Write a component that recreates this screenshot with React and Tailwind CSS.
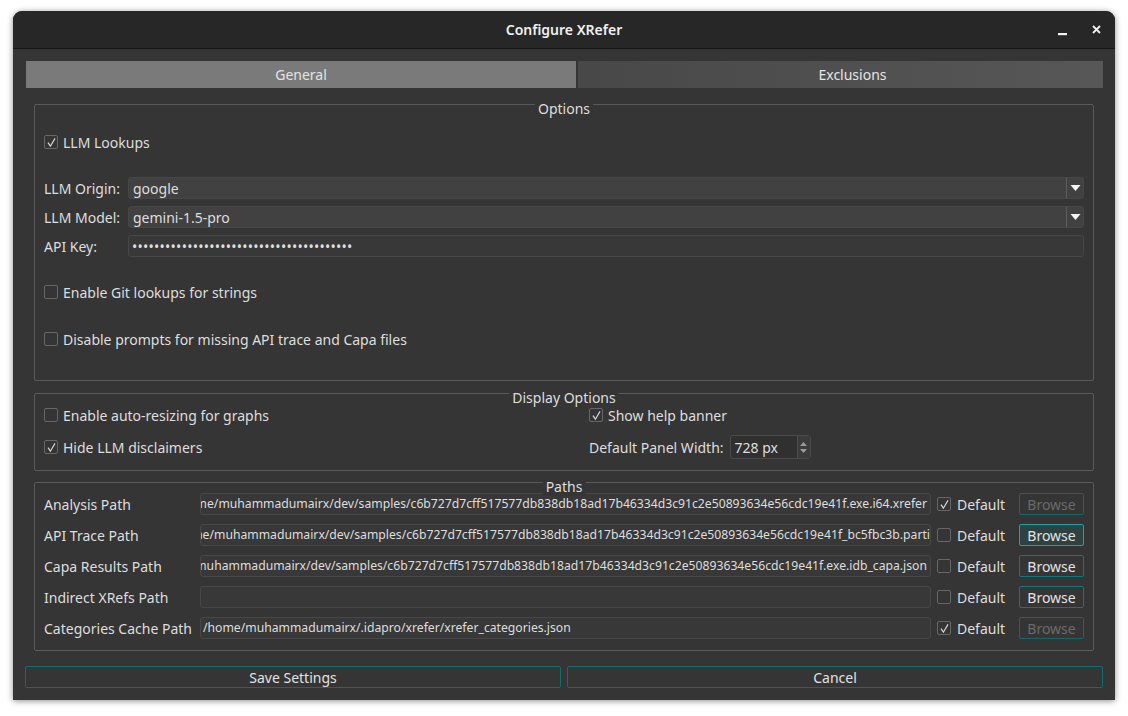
import React from 'react';

const font = "font-['Noto_Sans',sans-serif]";

function Check({ checked }) {
  return (
    <span className="w-[14px] h-[14px] border border-[#676767] rounded-[2px] flex items-center justify-center shrink-0">
      {checked && (
        <svg width="11" height="11" viewBox="0 0 11 11">
          <path d="M2 5.6 L4.4 9.2 L9 1.4" fill="none" stroke="#d6d6d6" strokeWidth="1.2" />
        </svg>
      )}
    </span>
  );
}

function CheckRow({ checked, label, className = '' }) {
  return (
    <div className={`flex items-center h-[22px] gap-[5px] ${className}`}>
      <Check checked={checked} />
      <span>{label}</span>
    </div>
  );
}

function Group({ title, className = '', children }) {
  return (
    <div className={`relative border border-[#5a5a5a] rounded-[2px] ${className}`}>
      <span className="absolute left-1/2 -translate-x-1/2 top-[-5px] leading-[18px] px-[3px] bg-[#353535] whitespace-nowrap">
        {title}
      </span>
      {children}
    </div>
  );
}

function Combo({ label, value }) {
  return (
    <div className="flex items-center h-[22px]">
      <span className="w-[84px] shrink-0">{label}</span>
      <div className="flex-1 h-[22px] flex items-center bg-[#414141] border border-[#474747] rounded-[3px]">
        <span className="flex-1 pl-[4px]">{value}</span>
        <div className="w-[17px] h-full border-l border-[#5e5e5e] flex items-center justify-center">
          <svg width="11" height="8" viewBox="0 0 11 8">
            <path d="M0.5 1 L10.5 1 L5.5 7 Z" fill="#f4f4f4" />
          </svg>
        </div>
      </div>
    </div>
  );
}

const paths = [
  { label: 'Analysis Path', value: '/home/muhammadumairx/dev/samples/c6b727d7cff517577db838db18ad17b46334d3c91c2e50893634e56cdc19e41f.exe.i64.xrefer', def: true, pr: 'pr-[3px]' },
  { label: 'API Trace Path', value: '/home/muhammadumairx/dev/samples/c6b727d7cff517577db838db18ad17b46334d3c91c2e50893634e56cdc19e41f_bc5fbc3b.parti', def: false, hover: true, pr: 'pr-0' },
  { label: 'Capa Results Path', value: '/home/muhammadumairx/dev/samples/c6b727d7cff517577db838db18ad17b46334d3c91c2e50893634e56cdc19e41f.exe.idb_capa.json', def: false, pr: 'pr-[3px]' },
  { label: 'Indirect XRefs Path', value: '', def: false, pr: 'pr-[3px]' },
  { label: 'Categories Cache Path', value: '/home/muhammadumairx/.idapro/xrefer/xrefer_categories.json', def: true, start: true, pr: 'pr-[3px]' },
];

function PathRow({ p }) {
  return (
    <div className="flex items-center h-[22px]">
      <span className="w-[156px] shrink-0 whitespace-nowrap">{p.label}</span>
      <div
        className={`w-[731px] h-[22px] bg-[#383838] border border-[#474747] rounded-[3px] overflow-hidden flex items-center whitespace-nowrap text-[12.2px] ${
          p.start ? 'justify-start pl-[2px]' : `justify-end ${p.pr}`
        }`}
      >
        <span className="shrink-0">{p.value}</span>
      </div>
      <div className="ml-[6px] flex items-center gap-[6px]">
        <Check checked={p.def} />
        <span>Default</span>
      </div>
      <div className="flex-1" />
      <button
        className={`w-[65px] h-[22px] rounded-[2px] border flex items-center justify-center ${
          p.def
            ? 'border-[#0f6b6b] text-[#6a6a6a]'
            : p.hover
            ? 'border-[#18a4a4] bg-[#2e4242] text-[#e2e2e2]'
            : 'border-[#127777] text-[#e2e2e2]'
        }`}
      >
        Browse
      </button>
    </div>
  );
}

export default function App() {
  return (
    <div className={`w-[1128px] h-[716px] bg-white pl-[13px] pt-[11px] ${font} text-[14px] text-[#dedede]`}>
      <div className="w-[1102px] h-[689px] bg-[#353535] rounded-t-[9px] overflow-hidden shadow-[0_1px_6px_rgba(0,0,0,0.45)] flex flex-col">
        {/* Title bar */}
        <div className="h-[38px] bg-[#272727] border-b border-[#161616] flex items-center relative shrink-0">
          <span className="w-full text-center font-semibold text-[#f0f0f0] leading-none pt-[1px]">Configure XRefer</span>
          <svg className="absolute left-[1045px] top-[22px]" width="9" height="3" viewBox="0 0 9 3">
            <rect x="0" y="0" width="9" height="2.2" fill="#f0f0f0" />
          </svg>
          <svg className="absolute left-[1079px] top-[14px]" width="9" height="9" viewBox="0 0 9 9">
            <path d="M1 1 L8 8 M8 1 L1 8" stroke="#f0f0f0" strokeWidth="1.8" />
          </svg>
        </div>

        {/* Body */}
        <div className="flex-1 flex flex-col px-[12px]">
          {/* Tabs */}
          <div className="mt-[12px] ml-px h-[27px] flex gap-[2px] shrink-0">
            <div className="w-[550px] bg-[#7a7a7a] flex items-center justify-center text-[#e4e4e4]">General</div>
            <div className="flex-1 bg-gradient-to-r from-[#484848] to-[#575757] flex items-center justify-center pl-[24px] text-[#e4e4e4]">
              Exclusions
            </div>
          </div>

          {/* Options */}
          <Group title="Options" className="mt-[16px] ml-[9px] w-[1060px] h-[277px] pt-[26px] pl-[9px] pr-[9px]">
            <CheckRow checked label="LLM Lookups" />
            <div className="mt-[24px] flex flex-col gap-[7px]">
              <Combo label="LLM Origin:" value="google" />
              <Combo label="LLM Model:" value="gemini-1.5-pro" />
              <div className="flex items-center h-[22px]">
                <span className="w-[84px] shrink-0">API Key:</span>
                <div className="flex-1 h-[22px] flex items-center bg-[#383838] border border-[#474747] rounded-[3px] pl-[3px] overflow-hidden">
                  <span className="text-[14px] tracking-[0.25px]">{'•'.repeat(40)}</span>
                </div>
              </div>
            </div>
            <CheckRow label="Enable Git lookups for strings" className="mt-[24px]" />
            <CheckRow label="Disable prompts for missing API trace and Capa files" className="mt-[25px]" />
          </Group>

          {/* Display Options */}
          <Group title="Display Options" className="mt-[12px] ml-[9px] w-[1060px] h-[78px] pt-[10px] pl-[9px] pr-[9px]">
            <div className="flex">
              <div className="w-[545px] flex flex-col gap-[10px]">
                <CheckRow label="Enable auto-resizing for graphs" />
                <CheckRow checked label="Hide LLM disclaimers" />
              </div>
              <div className="flex flex-col gap-[10px]">
                <CheckRow checked label="Show help banner" />
                <div className="flex items-center h-[22px]">
                  <span>Default Panel Width:</span>
                  <div className="ml-[6px] w-[81px] h-[24px] bg-[#303030] border border-[#4a4a4a] rounded-[3px] flex items-center">
                    <span className="flex-1 pl-[4px]">728 px</span>
                    <div className="w-[13px] h-full border-l border-[#4e4e4e] bg-[#3b3b3b] flex flex-col items-center justify-center gap-[3px]">
                      <svg width="7" height="4" viewBox="0 0 7 4"><path d="M0 4 L7 4 L3.5 0 Z" fill="#9a9a9a" /></svg>
                      <svg width="7" height="4" viewBox="0 0 7 4"><path d="M0 0 L7 0 L3.5 4 Z" fill="#9a9a9a" /></svg>
                    </div>
                  </div>
                </div>
              </div>
            </div>
          </Group>

          {/* Paths */}
          <Group title="Paths" className="mt-[11px] ml-[9px] w-[1060px] h-[169px] pt-[10px] pl-[9px] pr-[9px]">
            <div className="flex flex-col gap-[9px]">
              {paths.map((p) => (
                <PathRow key={p.label} p={p} />
              ))}
            </div>
          </Group>

          {/* Buttons */}
          <div className="mt-[15px] h-[22px] flex gap-[6px] shrink-0">
            <button className="flex-1 border border-[#0f6f6f] rounded-[2px] flex items-center justify-center text-[#e2e2e2]">Save Settings</button>
            <button className="flex-1 border border-[#0f6f6f] rounded-[2px] flex items-center justify-center text-[#e2e2e2]">Cancel</button>
          </div>
        </div>
      </div>
    </div>
  );
}
